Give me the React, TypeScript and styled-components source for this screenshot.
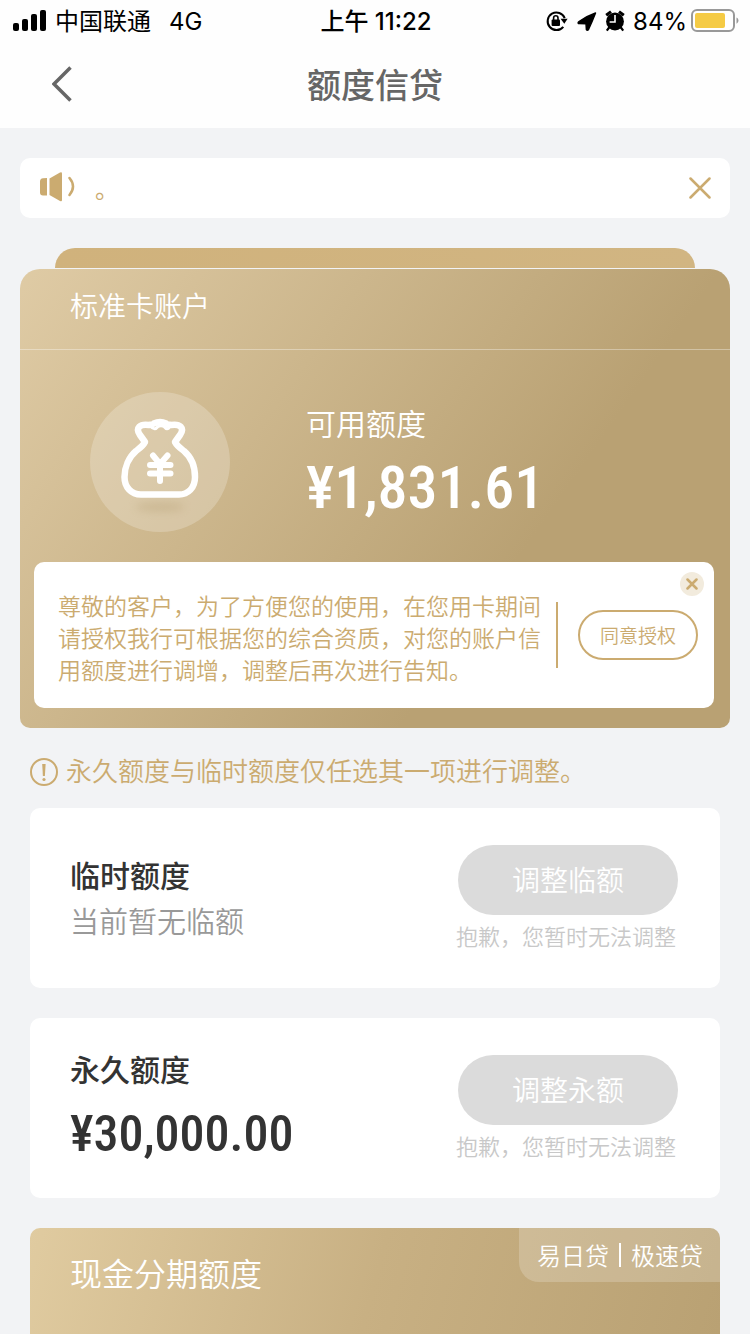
import React from "react";
import styled, { createGlobalStyle } from "styled-components";

const GOLD = "#cbab70";

const GlobalStyle = createGlobalStyle`
  *, *::before, *::after { box-sizing: border-box; }
  body {
    margin: 0;
    background: #f2f3f5;
    font-family: "Noto Sans CJK SC", sans-serif;
    font-weight: 350;
  }
  h1, h2, p { margin: 0; font-weight: inherit; }
  button { margin: 0; padding: 0; border: 0; background: none; font: inherit; color: inherit; }
  svg { display: block; flex: none; }
`;

const Page = styled.div`
  display: flex;
  flex-direction: column;
  min-height: 100vh;
`;

const Header = styled.header`
  background: #fefefe;
`;

const StatusBar = styled.div`
  display: grid;
  grid-template-columns: 1fr auto 1fr;
  align-items: center;
  height: 40px;
  padding: 0 11px 0 13px;
  font-family: Inter, "Noto Sans CJK SC", sans-serif;
  font-size: 24px;
  font-weight: 400;
  line-height: 40px;
  color: #000;
`;

const StatusGroup = styled.div<{ $end?: boolean }>`
  display: flex;
  align-items: center;
  gap: 8px;
  justify-content: ${(p) => (p.$end ? "flex-end" : "flex-start")};
`;

const StatusText = styled.span`
  padding-top: 2px;
`;

const Network = styled(StatusText)`
  margin-left: 10px;
`;

const Clock = styled.time`
  padding-top: 2px;
  font-weight: 500;
`;

const Battery = styled.span`
  display: flex;
  align-items: center;
  gap: 4px;
`;

const NavBar = styled.div`
  display: grid;
  grid-template-columns: 88px 1fr 88px;
  align-items: center;
  height: 88px;
  padding: 0 18px;
`;

const IconButton = styled.button`
  display: flex;
  align-items: center;
  justify-content: center;
`;

const PageTitle = styled.h1`
  text-align: center;
  font-size: 34px;
  line-height: 48px;
  font-weight: 500;
  color: #666;
`;

const Main = styled.main`
  display: flex;
  flex-direction: column;
  flex: 1;
  padding: 30px 20px 0;
`;

const Notice = styled.section`
  display: flex;
  align-items: center;
  height: 60px;
  padding: 0 19px;
  border-radius: 10px;
  background: #fff;
  color: ${GOLD};
`;

const NoticeText = styled.p`
  flex: 1;
  margin-left: 20px;
  font-size: 24px;
  line-height: 36px;
  font-weight: 400;
`;

const CardEdge = styled.div`
  height: 20px;
  margin: 30px 35px 1px;
  border-radius: 20px 20px 0 0;
  background: linear-gradient(100deg, #d0b27c, #d1b582);
`;

const AccountCard = styled.section`
  border-radius: 20px 20px 10px 10px;
  background: linear-gradient(125deg, #dfcba5 0%, #b9a173 68%);
  color: #fff;
`;

const AccountName = styled.h2`
  height: 81px;
  padding: 16px 50px 0;
  border-bottom: 1px solid rgba(255, 255, 255, 0.35);
  font-size: 28px;
  line-height: 40px;
`;

const Balance = styled.div`
  display: grid;
  grid-template-columns: 236px 1fr;
  padding: 42px 0 30px 50px;
`;

const Medallion = styled.div`
  width: 140px;
  height: 140px;
  margin-left: 20px;
  border-radius: 50%;
  background: rgba(255, 255, 255, 0.22);
`;

const BalanceText = styled.div`
  padding-top: 8px;
`;

const BalanceLabel = styled.p`
  font-size: 30px;
  line-height: 44px;
`;

const Amount = styled.p<{ $size: number }>`
  padding-top: 4px;
  font-family: "Roboto Condensed", Roboto, sans-serif;
  font-size: ${(p) => p.$size}px;
  line-height: 80px;
  font-weight: 500;
`;

const ConsentPanel = styled.div`
  position: relative;
  display: flex;
  align-items: center;
  margin: 0 16px 0 14px;
  padding: 23px 16px 23px 24px;
  border-radius: 10px;
  background: #fff;
  color: ${GOLD};
`;

const CardFoot = styled.div`
  padding-bottom: 20px;
`;

const ConsentText = styled.p`
  flex: 1;
  padding-top: 4px;
  font-size: 23px;
  line-height: 32px;
`;

const Rule = styled.span`
  width: 2px;
  height: 66px;
  margin: 0 20px 0 15px;
  background: ${GOLD};
`;

const ConsentButton = styled.button`
  width: 120px;
  height: 50px;
  border: 2px solid ${GOLD};
  border-radius: 25px;
  font-size: 19px;
  line-height: 28px;
`;

const CornerClose = styled(IconButton)`
  position: absolute;
  top: 10px;
  right: 10px;
  width: 24px;
  height: 24px;
  border-radius: 50%;
  background: #f2ebdd;
`;

const Tip = styled.p`
  display: flex;
  align-items: center;
  gap: 8px;
  height: 80px;
  padding: 8px 10px 0;
  font-size: 26px;
  line-height: 40px;
  color: ${GOLD};
`;

const TipText = styled.span`
  padding-bottom: 4px;
`;

const Cards = styled.div`
  display: flex;
  flex-direction: column;
  flex: 1;
  gap: 30px;
  padding: 0 10px;
`;

const LimitCard = styled.section`
  display: flex;
  justify-content: space-between;
  height: 180px;
  padding: 0 42px 0 40px;
  border-radius: 10px;
  background: #fff;
  color: #333;
`;

const LimitInfo = styled.div<{ $top: number }>`
  padding-top: ${(p) => p.$top}px;
`;

const LimitName = styled.h2`
  font-size: 30px;
  line-height: 44px;
  font-weight: 500;
`;

const LimitEmpty = styled.p`
  padding-top: 2px;
  font-size: 29px;
  line-height: 44px;
  color: #999;
`;

const LimitAction = styled.div`
  display: flex;
  flex-direction: column;
  align-items: flex-end;
  gap: 4px;
  padding-top: 37px;
`;

const AdjustButton = styled.button`
  width: 220px;
  height: 70px;
  padding-bottom: 2px;
  border-radius: 35px;
  background: #dbdbdb;
  font-size: 28px;
  line-height: 40px;
  color: #fff;
`;

const AdjustHint = styled.p`
  padding-right: 2px;
  font-size: 22px;
  line-height: 32px;
  color: #c8c8c8;
`;

const CashCard = styled.section`
  display: flex;
  flex: 1;
  justify-content: space-between;
  align-items: flex-start;
  min-height: 106px;
  border-radius: 10px 10px 0 0;
  overflow: hidden;
  background: linear-gradient(105deg, #e0cba0 0%, #c8b083 50%, #b9a173 100%);
  color: #fff;
`;

const CashTitle = styled.h2`
  padding: 21px 40px 0;
  font-size: 32px;
  line-height: 46px;
`;

const CashTag = styled.span`
  display: flex;
  align-items: center;
  gap: 10px;
  height: 54px;
  padding: 0 17px 0 18px;
  border-radius: 0 0 0 20px;
  background: rgba(255, 255, 255, 0.2);
  font-size: 24px;
  line-height: 54px;
`;

const TagRule = styled.i`
  width: 2px;
  height: 24px;
  background: #fff;
`;

const SignalIcon = () => (
  <svg width="34" height="22" viewBox="0 0 34 22" aria-hidden="true">
    <rect x="0" y="13" width="6" height="8" rx="2" />
    <rect x="9" y="9" width="6" height="12" rx="2" />
    <rect x="18" y="4" width="6" height="17" rx="2" />
    <rect x="27" y="0" width="6" height="21" rx="2" />
  </svg>
);

const RotationLockIcon = () => (
  <svg width="23" height="22" viewBox="0 0 23 22" aria-hidden="true">
    <path d="M17.300 16.800a8.800 8.800 0 1 1 1.400-8.600" fill="none" stroke="#000" strokeWidth="2" />
    <path d="M14.600 8.800h7l-3.300 5z" />
    <rect x="5.600" y="9.600" width="8.400" height="6.400" rx="1" />
    <path d="M7.600 10V8a2.200 2.200 0 0 1 4.400 0v2" fill="none" stroke="#000" strokeWidth="1.600" />
  </svg>
);

const LocationIcon = () => (
  <svg width="20" height="20" viewBox="0 0 20 20" aria-hidden="true">
    <path d="M18.500 2Q15 11 11.500 18.500Q10.300 20 9.400 18.500L9 12.800L1.600 12.600Q.5 11.600 2 10.500Q10 5 18.500 2Z" stroke="#000" strokeWidth="1.500" strokeLinejoin="round" />
  </svg>
);

const AlarmIcon = () => (
  <svg width="20" height="22" viewBox="0 0 20 22" aria-hidden="true">
    <circle cx="10" cy="11.500" r="8.900" />
    <path d="M1.200 5.200 6 1.600M18.800 5.200 14 1.600" fill="none" stroke="#000" strokeWidth="3" />
    <path d="M4.500 17 1.800 20.600M15.500 17l2.700 3.600" stroke="#000" strokeWidth="2.200" />
    <path d="M10 5v7H4.600" fill="none" stroke="#fff" strokeWidth="1.600" />
  </svg>
);

const BatteryIcon = () => (
  <svg width="48" height="24" viewBox="0 0 48 24" aria-hidden="true">
    <rect x="1" y="1" width="42" height="21" rx="5" fill="#fff" stroke="#999" strokeWidth="2" />
    <rect x="4" y="4" width="30" height="15" rx="2" fill="#f5cb45" />
    <path d="M45.500 8.500c2.600 1.400 2.600 4.800 0 6.200z" fill="#999" />
  </svg>
);

const BackIcon = () => (
  <svg width="20" height="36" viewBox="0 0 20 36" aria-hidden="true">
    <path d="M18.500 1.500 2 18l16.500 16.500" fill="none" stroke="#666" strokeWidth="3.500" />
  </svg>
);

const SpeakerIcon = () => (
  <svg width="36" height="32" viewBox="0 0 36 32" fill={GOLD} aria-hidden="true">
    <path d="M8 6v17.500H4Q1 23.500 1 20.500V9.500Q1 6.500 4 6.300Z" />
    <path d="M10.500 6.500 21 .5q2-.8 2 1V28q0 2-2 1L10.500 23Z" />
    <path d="M30.500 6q7 8.500 0 17" fill="none" stroke={GOLD} strokeWidth="2.500" strokeLinecap="round" />
  </svg>
);

const CloseIcon = ({ size, stroke }: { size: number; stroke: number }) => (
  <svg width={size} height={size} viewBox={`0 0 ${size} ${size}`} aria-hidden="true">
    <path
      d={`M1.500 1.500 ${size - 1.5} ${size - 1.5}M${size - 1.5} 1.500 1.500 ${size - 1.5}`}
      stroke={GOLD}
      strokeWidth={stroke}
      strokeLinecap="round"
    />
  </svg>
);

const MoneyBagIcon = () => (
  <svg width="140" height="140" viewBox="0 0 140 140" fill="none" aria-hidden="true">
    <defs>
      <filter id="bagShadow" x="-30%" y="-150%" width="160%" height="400%">
        <feGaussianBlur stdDeviation="4" />
      </filter>
    </defs>
    <ellipse cx="70" cy="115" rx="25" ry="4" fill="#a98f5e" opacity="0.3" filter="url(#bagShadow)" />
    <path
      d="M55 50 50 43C45 36 50 31.500 59 33C62 32.500 63 32.500 64 31.500C68 29.500 72 29.500 76 31.500C77 32.500 78 32.500 81 33C90 31.500 95 36 90 43L85 50C87 54 90 56 94 59C101 65 105 75 105 85C105 96 98 102.500 89 102.500H51C41 102.500 34.500 95 34.500 85C34.500 75 39 65 46 59C50 56 53 54 55 50Z"
      stroke="#fff"
      strokeWidth="6.500"
      strokeLinejoin="round"
    />
    <path d="M60 34C64 38 66 37 68 34.500C70 33.500 72 33.500 74 34.500C76 37 78 38 80 34" stroke="#fff" strokeWidth="3" strokeLinecap="round" />
    <path d="M63 63.500 70 72l7.500-8.500M60 73h20.500M60 81.500h20.500M70 73v16" stroke="#fff" strokeWidth="6" strokeLinecap="round" strokeLinejoin="round" />
  </svg>
);

const InfoIcon = () => (
  <svg width="28" height="28" viewBox="0 0 28 28" aria-hidden="true">
    <circle cx="14" cy="14" r="13" fill="none" stroke={GOLD} strokeWidth="2" />
    <path d="M12.200 6h3.400l-.7 12h-2z" fill={GOLD} />
    <circle cx="14" cy="21.500" r="1.600" fill={GOLD} />
  </svg>
);

interface LimitProps {
  name: string;
  action: string;
  top: number;
  children: React.ReactNode;
}

const Limit = ({ name, action, top, children }: LimitProps) => (
  <LimitCard>
    <LimitInfo $top={top}>
      <LimitName>{name}</LimitName>
      {children}
    </LimitInfo>
    <LimitAction>
      <AdjustButton type="button" disabled>{action}</AdjustButton>
      <AdjustHint>抱歉，您暂时无法调整</AdjustHint>
    </LimitAction>
  </LimitCard>
);

export default function App() {
  return (
    <Page>
      <GlobalStyle />
      <Header>
        <StatusBar>
          <StatusGroup>
            <SignalIcon />
            <StatusText>中国联通</StatusText>
            <Network>4G</Network>
          </StatusGroup>
          <Clock>上午 11:22</Clock>
          <StatusGroup $end>
            <RotationLockIcon />
            <LocationIcon />
            <AlarmIcon />
            <Battery>
              <StatusText>84%</StatusText>
              <BatteryIcon />
            </Battery>
          </StatusGroup>
        </StatusBar>
        <NavBar>
          <IconButton type="button" aria-label="返回">
            <BackIcon />
          </IconButton>
          <PageTitle>额度信贷</PageTitle>
        </NavBar>
      </Header>
      <Main>
        <Notice>
          <SpeakerIcon />
          <NoticeText>。</NoticeText>
          <IconButton type="button" aria-label="关闭公告">
            <CloseIcon size={22} stroke={2.5} />
          </IconButton>
        </Notice>
        <CardEdge />
        <AccountCard>
          <AccountName>标准卡账户</AccountName>
          <Balance>
            <Medallion>
              <MoneyBagIcon />
            </Medallion>
            <BalanceText>
              <BalanceLabel>可用额度</BalanceLabel>
              <Amount $size={60}>¥1,831.61</Amount>
            </BalanceText>
          </Balance>
          <CardFoot>
            <ConsentPanel>
              <ConsentText>
                尊敬的客户，为了方便您的使用，在您用卡期间请授权我行可根据您的综合资质，对您的账户信用额度进行调增，调整后再次进行告知。
              </ConsentText>
              <Rule />
              <ConsentButton type="button">同意授权</ConsentButton>
              <CornerClose type="button" aria-label="关闭提示">
                <CloseIcon size={12} stroke={2.5} />
              </CornerClose>
            </ConsentPanel>
          </CardFoot>
        </AccountCard>
        <Tip>
          <InfoIcon />
          <TipText>永久额度与临时额度仅任选其一项进行调整。</TipText>
        </Tip>
        <Cards>
          <Limit name="临时额度" action="调整临额" top={44}>
            <LimitEmpty>当前暂无临额</LimitEmpty>
          </Limit>
          <Limit name="永久额度" action="调整永额" top={28}>
            <Amount $size={50}>¥30,000.00</Amount>
          </Limit>
          <CashCard>
            <CashTitle>现金分期额度</CashTitle>
            <CashTag>
              易日贷
              <TagRule />
              极速贷
            </CashTag>
          </CashCard>
        </Cards>
      </Main>
    </Page>
  );
}
